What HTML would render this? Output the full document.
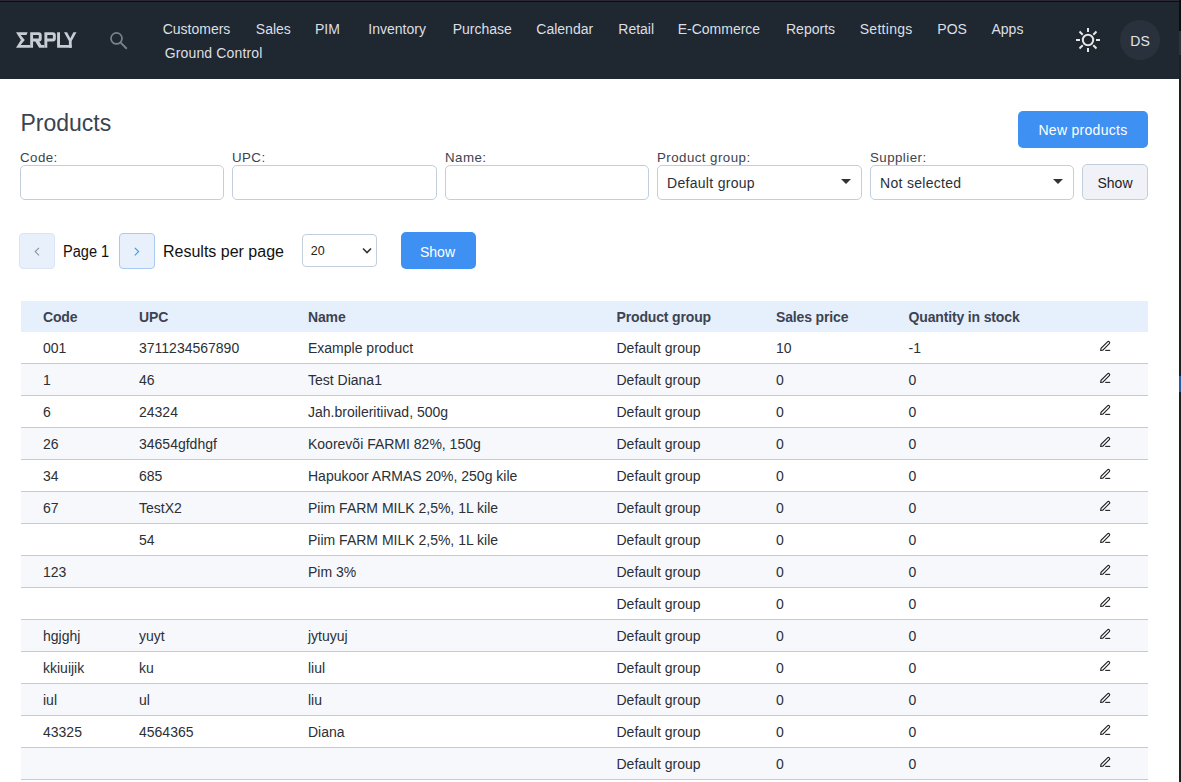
<!DOCTYPE html>
<html><head><meta charset="utf-8">
<style>
*{margin:0;padding:0;box-sizing:border-box}
html,body{width:1181px;height:782px;overflow:hidden;background:#fff;font-family:"Liberation Sans",sans-serif;color:#2b2f36}
.abs{position:absolute}
#hdr{position:absolute;left:0;top:0;width:1181px;height:79px;background:#1f2831}
#hdr .t0{position:absolute;left:0;top:0;width:1181px;height:1px;background:#2c2934}
#hdr .t1{position:absolute;left:0;top:1px;width:1181px;height:1px;background:#0c0c0e}
.nav{position:absolute;font-size:14px;color:#dcdfe4;line-height:16px;white-space:nowrap}
#avatar{position:absolute;left:1120px;top:20px;width:40px;height:40px;border-radius:50%;background:#29323c;color:#e1e4e8;font-size:14px;text-align:center;line-height:40px;padding-top:1px}
#sbar{position:absolute;left:1179px;top:0;width:2px;height:782px;background:linear-gradient(#0d0d10 0,#0d0d10 31px,#303036 31px,#303036 55px,#1f1f23 55px,#1f1f23 376px,#2a5aa0 376px,#2a5aa0 392px,#1f1f23 392px)}
h1{position:absolute;left:20.5px;top:109px;font-size:23px;font-weight:normal;color:#3b4350;line-height:28px}
.lbl{position:absolute;top:149.5px;font-size:13.3px;letter-spacing:0.45px;color:#3b4350;line-height:16px}
.inp{position:absolute;top:165px;height:35px;border:1px solid #c3cedb;border-radius:5px;background:#fff}
.sel{font-size:14px;letter-spacing:0.3px;color:#2b2f36;line-height:35px;padding-left:9px}
.tri{position:absolute;right:10px;top:13px;width:0;height:0;border-left:5px solid transparent;border-right:5px solid transparent;border-top:5px solid #333}
.btn-blue{position:absolute;background:#3e91f3;color:#fff;border-radius:5px;font-size:14px;text-align:center}
.tbl{position:absolute;left:21px;top:301px;width:1127px}
.th{height:31px;background:#e6f0fd;position:relative;font-weight:bold;color:#3d4350}
.tr{height:32px;border-bottom:1px solid #c0cad8;position:relative}
.tr.s{background:#f6f8fc}
.c{position:absolute;font-size:14px;line-height:16px;white-space:nowrap}
.th .c{top:8px;letter-spacing:-0.15px}
.tr .c{top:8px}
.c1{left:22px}.c2{left:118px}.c3{left:287px}.c4{left:595.5px}.c5{left:755px}.c6{left:887.5px}
.ed{position:absolute;left:1078px;top:7px;width:14px;height:14px}
</style></head><body>
<div id="hdr">
  <div class="t0"></div><div class="t1"></div>
  <svg class="abs" style="left:16px;top:32px" width="61" height="16" viewBox="0 0 61 16">
    <g fill="#c8ccd3" fill-rule="evenodd">
      <path d="M0,0.2 H11.6 L10.5,3.1 H4.6 L8.8,7.9 L4.6,13 H14.3 V15.85 H0 L4.9,7.9 Z"/>
      <path d="M14.2,0.2 H22.7 Q25.7,0.2 25.7,3.3 V6.4 Q25.7,9.4 23.3,9.4 L25.4,13 H28.4 V15.85 H23.1 L19.3,9.4 H17.05 V15.85 H14.2 Z M17.05,3.1 V6.6 H22.5 Q22.8,6.6 22.8,6.2 V3.5 Q22.8,3.1 22.5,3.1 Z"/>
      <path d="M28.4,0.2 H36.8 Q39.8,0.2 39.8,3.3 V6.4 Q39.8,9.4 36.8,9.4 H31.3 V15.85 H28.4 Z M31.3,3.1 V6.6 H36.6 Q36.9,6.6 36.9,6.2 V3.5 Q36.9,3.1 36.6,3.1 Z"/>
      <path d="M41.1,0.2 H44 V13 H55.7 V15.85 H41.1 Z"/>
      <path d="M48,0.2 H51.1 L54.3,6.3 L57.4,0.2 H60.5 L55.7,9 V15.85 H52.9 V9 Z"/>
    </g>
  </svg>
  <svg class="abs" style="left:106px;top:28px" width="24" height="24" viewBox="0 0 24 24">
    <circle cx="10.5" cy="10.4" r="5.5" fill="none" stroke="#7a8089" stroke-width="1.7"/>
    <path d="M14.6 14.6 L20.3 20.2" stroke="#7a8089" stroke-width="1.9" stroke-linecap="round"/>
  </svg>
  <div class="nav" style="left:162.7px;top:21px">Customers</div>
  <div class="nav" style="left:255.8px;top:21px">Sales</div>
  <div class="nav" style="left:315px;top:21px">PIM</div>
  <div class="nav" style="left:368.3px;top:21px">Inventory</div>
  <div class="nav" style="left:452.7px;top:21px">Purchase</div>
  <div class="nav" style="left:536.3px;top:21px">Calendar</div>
  <div class="nav" style="left:618.3px;top:21px">Retail</div>
  <div class="nav" style="left:677.7px;top:21px">E-Commerce</div>
  <div class="nav" style="left:786px;top:21px">Reports</div>
  <div class="nav" style="left:859.7px;top:21px;letter-spacing:0.3px">Settings</div>
  <div class="nav" style="left:937.3px;top:21px">POS</div>
  <div class="nav" style="left:991.5px;top:21px">Apps</div>
  <div class="nav" style="left:164.7px;top:45px;letter-spacing:0.15px">Ground Control</div>
  <svg class="abs" style="left:1074px;top:26px" width="28" height="28" viewBox="0 0 28 28">
    <circle cx="14" cy="14" r="5.2" fill="none" stroke="#e6e6e6" stroke-width="2"/>
    <g stroke="#e6e6e6" stroke-width="2">
      <path d="M14 2 L14 6 M14 22 L14 26 M2 14 L6 14 M22 14 L26 14 M5.5 5.5 L8.7 8.7 M19.3 19.3 L22.5 22.5 M5.5 22.5 L8.7 19.3 M19.3 8.7 L22.5 5.5"/>
    </g>
  </svg>
  <div id="avatar">DS</div>
</div>
<div id="sbar"></div>

<h1>Products</h1>
<div class="btn-blue" style="left:1018px;top:111px;width:130px;height:37px;line-height:39px;letter-spacing:0.3px">New products</div>

<div class="lbl" style="left:20px">Code:</div>
<div class="lbl" style="left:232px">UPC:</div>
<div class="lbl" style="left:445px">Name:</div>
<div class="lbl" style="left:657px">Product group:</div>
<div class="lbl" style="left:870px">Supplier:</div>
<div class="inp" style="left:20px;width:204px"></div>
<div class="inp" style="left:232px;width:205px"></div>
<div class="inp" style="left:445px;width:204px"></div>
<div class="inp sel" style="left:657px;width:205px">Default group<div class="tri"></div></div>
<div class="inp sel" style="left:870px;width:204px">Not selected<div class="tri"></div></div>
<div class="abs" style="left:1082px;top:164px;width:66px;height:36px;border:1px solid #c3cedb;border-radius:5px;background:#f0f2f8;font-size:14px;line-height:36px;text-align:center;color:#222">Show</div>

<!-- pagination -->
<div class="abs" style="left:19px;top:233px;width:36px;height:36px;border:1px solid #d9e4f5;border-radius:4px;background:#e8f0fc"></div>
<svg class="abs" style="left:33px;top:246px" width="8" height="11" viewBox="0 0 8 11"><path d="M6 1.8 L2.2 5.6 L6 9.4" fill="none" stroke="#8d929a" stroke-width="1.1"/></svg>
<div class="abs" style="left:62.7px;top:241.5px;font-size:16px;line-height:20px;color:#111;transform:scaleX(0.91);transform-origin:0 0">Page 1</div>
<div class="abs" style="left:119px;top:233px;width:36px;height:36px;border:1px solid #a9c9f2;border-radius:4px;background:#e8f0fc"></div>
<svg class="abs" style="left:133px;top:246px" width="8" height="11" viewBox="0 0 8 11"><path d="M1.8 1.8 L5.6 5.6 L1.8 9.4" fill="none" stroke="#2f9bf0" stroke-width="1.1"/></svg>
<div class="abs" style="left:163px;top:241.5px;font-size:16px;line-height:20px;color:#111">Results per page</div>
<div class="abs" style="left:302px;top:234px;width:75px;height:33px;border:1px solid #c3cedb;border-radius:4px;background:#fff;font-size:12.5px;line-height:33px;padding-left:7.7px;color:#222">20</div>
<svg class="abs" style="left:361px;top:246px" width="12" height="9" viewBox="0 0 12 9"><path d="M2 2.5 L6 6.5 L10 2.5" fill="none" stroke="#333" stroke-width="1.6"/></svg>
<div class="btn-blue" style="left:401px;top:232px;width:75px;height:37px;line-height:40px;padding-right:2px">Show</div>

<div class="tbl">
  <div class="th"><span class="c c1">Code</span><span class="c c2">UPC</span><span class="c c3">Name</span><span class="c c4">Product group</span><span class="c c5">Sales price</span><span class="c c6">Quantity in stock</span></div>
  <div class="tr"><span class="c c1">001</span><span class="c c2">3711234567890</span><span class="c c3">Example product</span><span class="c c4">Default group</span><span class="c c5">10</span><span class="c c6">-1</span><svg class="ed" viewBox="0 0 14 14"><path d="M1.7 11.3 L2 9.3 L8.5 2.8 Q9.4 1.9 10.3 2.8 Q11.2 3.7 10.3 4.6 L3.8 11.1 Z" fill="none" stroke="#222" stroke-width="1.1"/><path d="M6.2 11.4 L11.2 11.4" stroke="#222" stroke-width="1.1"/></svg></div>
  <div class="tr s"><span class="c c1">1</span><span class="c c2">46</span><span class="c c3">Test Diana1</span><span class="c c4">Default group</span><span class="c c5">0</span><span class="c c6">0</span><svg class="ed" viewBox="0 0 14 14"><path d="M1.7 11.3 L2 9.3 L8.5 2.8 Q9.4 1.9 10.3 2.8 Q11.2 3.7 10.3 4.6 L3.8 11.1 Z" fill="none" stroke="#222" stroke-width="1.1"/><path d="M6.2 11.4 L11.2 11.4" stroke="#222" stroke-width="1.1"/></svg></div>
  <div class="tr"><span class="c c1">6</span><span class="c c2">24324</span><span class="c c3">Jah.broileritiivad, 500g</span><span class="c c4">Default group</span><span class="c c5">0</span><span class="c c6">0</span><svg class="ed" viewBox="0 0 14 14"><path d="M1.7 11.3 L2 9.3 L8.5 2.8 Q9.4 1.9 10.3 2.8 Q11.2 3.7 10.3 4.6 L3.8 11.1 Z" fill="none" stroke="#222" stroke-width="1.1"/><path d="M6.2 11.4 L11.2 11.4" stroke="#222" stroke-width="1.1"/></svg></div>
  <div class="tr s"><span class="c c1">26</span><span class="c c2">34654gfdhgf</span><span class="c c3">Koorevõi FARMI 82%, 150g</span><span class="c c4">Default group</span><span class="c c5">0</span><span class="c c6">0</span><svg class="ed" viewBox="0 0 14 14"><path d="M1.7 11.3 L2 9.3 L8.5 2.8 Q9.4 1.9 10.3 2.8 Q11.2 3.7 10.3 4.6 L3.8 11.1 Z" fill="none" stroke="#222" stroke-width="1.1"/><path d="M6.2 11.4 L11.2 11.4" stroke="#222" stroke-width="1.1"/></svg></div>
  <div class="tr"><span class="c c1">34</span><span class="c c2">685</span><span class="c c3">Hapukoor ARMAS 20%, 250g kile</span><span class="c c4">Default group</span><span class="c c5">0</span><span class="c c6">0</span><svg class="ed" viewBox="0 0 14 14"><path d="M1.7 11.3 L2 9.3 L8.5 2.8 Q9.4 1.9 10.3 2.8 Q11.2 3.7 10.3 4.6 L3.8 11.1 Z" fill="none" stroke="#222" stroke-width="1.1"/><path d="M6.2 11.4 L11.2 11.4" stroke="#222" stroke-width="1.1"/></svg></div>
  <div class="tr s"><span class="c c1">67</span><span class="c c2">TestX2</span><span class="c c3">Piim FARM MILK 2,5%, 1L kile</span><span class="c c4">Default group</span><span class="c c5">0</span><span class="c c6">0</span><svg class="ed" viewBox="0 0 14 14"><path d="M1.7 11.3 L2 9.3 L8.5 2.8 Q9.4 1.9 10.3 2.8 Q11.2 3.7 10.3 4.6 L3.8 11.1 Z" fill="none" stroke="#222" stroke-width="1.1"/><path d="M6.2 11.4 L11.2 11.4" stroke="#222" stroke-width="1.1"/></svg></div>
  <div class="tr"><span class="c c2">54</span><span class="c c3">Piim FARM MILK 2,5%, 1L kile</span><span class="c c4">Default group</span><span class="c c5">0</span><span class="c c6">0</span><svg class="ed" viewBox="0 0 14 14"><path d="M1.7 11.3 L2 9.3 L8.5 2.8 Q9.4 1.9 10.3 2.8 Q11.2 3.7 10.3 4.6 L3.8 11.1 Z" fill="none" stroke="#222" stroke-width="1.1"/><path d="M6.2 11.4 L11.2 11.4" stroke="#222" stroke-width="1.1"/></svg></div>
  <div class="tr s"><span class="c c1">123</span><span class="c c3">Pim 3%</span><span class="c c4">Default group</span><span class="c c5">0</span><span class="c c6">0</span><svg class="ed" viewBox="0 0 14 14"><path d="M1.7 11.3 L2 9.3 L8.5 2.8 Q9.4 1.9 10.3 2.8 Q11.2 3.7 10.3 4.6 L3.8 11.1 Z" fill="none" stroke="#222" stroke-width="1.1"/><path d="M6.2 11.4 L11.2 11.4" stroke="#222" stroke-width="1.1"/></svg></div>
  <div class="tr"><span class="c c4">Default group</span><span class="c c5">0</span><span class="c c6">0</span><svg class="ed" viewBox="0 0 14 14"><path d="M1.7 11.3 L2 9.3 L8.5 2.8 Q9.4 1.9 10.3 2.8 Q11.2 3.7 10.3 4.6 L3.8 11.1 Z" fill="none" stroke="#222" stroke-width="1.1"/><path d="M6.2 11.4 L11.2 11.4" stroke="#222" stroke-width="1.1"/></svg></div>
  <div class="tr s"><span class="c c1">hgjghj</span><span class="c c2">yuyt</span><span class="c c3">jytuyuj</span><span class="c c4">Default group</span><span class="c c5">0</span><span class="c c6">0</span><svg class="ed" viewBox="0 0 14 14"><path d="M1.7 11.3 L2 9.3 L8.5 2.8 Q9.4 1.9 10.3 2.8 Q11.2 3.7 10.3 4.6 L3.8 11.1 Z" fill="none" stroke="#222" stroke-width="1.1"/><path d="M6.2 11.4 L11.2 11.4" stroke="#222" stroke-width="1.1"/></svg></div>
  <div class="tr"><span class="c c1">kkiuijik</span><span class="c c2">ku</span><span class="c c3">liul</span><span class="c c4">Default group</span><span class="c c5">0</span><span class="c c6">0</span><svg class="ed" viewBox="0 0 14 14"><path d="M1.7 11.3 L2 9.3 L8.5 2.8 Q9.4 1.9 10.3 2.8 Q11.2 3.7 10.3 4.6 L3.8 11.1 Z" fill="none" stroke="#222" stroke-width="1.1"/><path d="M6.2 11.4 L11.2 11.4" stroke="#222" stroke-width="1.1"/></svg></div>
  <div class="tr s"><span class="c c1">iul</span><span class="c c2">ul</span><span class="c c3">liu</span><span class="c c4">Default group</span><span class="c c5">0</span><span class="c c6">0</span><svg class="ed" viewBox="0 0 14 14"><path d="M1.7 11.3 L2 9.3 L8.5 2.8 Q9.4 1.9 10.3 2.8 Q11.2 3.7 10.3 4.6 L3.8 11.1 Z" fill="none" stroke="#222" stroke-width="1.1"/><path d="M6.2 11.4 L11.2 11.4" stroke="#222" stroke-width="1.1"/></svg></div>
  <div class="tr"><span class="c c1">43325</span><span class="c c2">4564365</span><span class="c c3">Diana</span><span class="c c4">Default group</span><span class="c c5">0</span><span class="c c6">0</span><svg class="ed" viewBox="0 0 14 14"><path d="M1.7 11.3 L2 9.3 L8.5 2.8 Q9.4 1.9 10.3 2.8 Q11.2 3.7 10.3 4.6 L3.8 11.1 Z" fill="none" stroke="#222" stroke-width="1.1"/><path d="M6.2 11.4 L11.2 11.4" stroke="#222" stroke-width="1.1"/></svg></div>
  <div class="tr s"><span class="c c4">Default group</span><span class="c c5">0</span><span class="c c6">0</span><svg class="ed" viewBox="0 0 14 14"><path d="M1.7 11.3 L2 9.3 L8.5 2.8 Q9.4 1.9 10.3 2.8 Q11.2 3.7 10.3 4.6 L3.8 11.1 Z" fill="none" stroke="#222" stroke-width="1.1"/><path d="M6.2 11.4 L11.2 11.4" stroke="#222" stroke-width="1.1"/></svg></div>
</div>
</body></html>
